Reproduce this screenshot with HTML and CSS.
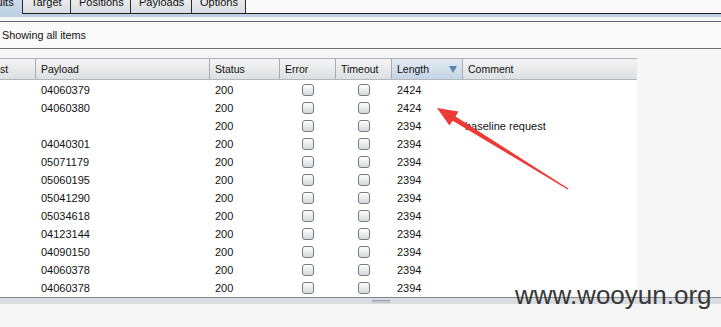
FILE: index.html
```html
<!DOCTYPE html>
<html lang="en">
  <head>
    <meta charset="UTF-8" />
    <meta name="viewport" content="width=device-width, initial-scale=1.0" />
    <link rel="stylesheet" href="styles.css">
    <title>Intruder results</title>
  </head>
  <body>

    <div class="tabbar">
      <div class="tab tab-active">Results</div>
      <div class="tab tab-target">Target</div>
      <div class="tab tab-positions">Positions</div>
      <div class="tab tab-payloads">Payloads</div>
      <div class="tab tab-options">Options</div>
      <div class="tab-fill"></div>
    </div>
    <div class="tab-strip"></div>

    <div class="filter">Showing all items</div>

    <section class="results">
      <div class="head">
        <div class="hcell">Request</div>
        <div class="hcell">Payload</div>
        <div class="hcell">Status</div>
        <div class="hcell">Error</div>
        <div class="hcell">Timeout</div>
        <div class="hcell hcell-sorted">Length <span class="sort-arrow"></span></div>
        <div class="hcell">Comment</div>
      </div>

      <div class="rows" id="rows"></div>
    </section>

    <div class="hscroll"><span class="thumb"></span></div>

    <!-- red arrow pointing at the different length -->
    <svg class="arrow" width="721" height="327" viewBox="0 0 721 327">
      <polygon fill="#ec3b37" points="437,108 458.5,111.5 455.5,116.4 568.4,188.6 567.6,189.4 452.7,120.8 449.5,125.5" />
    </svg>

    <div class="watermark">www.wooyun.org</div>

    <script>
      // payload, status, length, comment
      const results = [
        ["04060379", "200", "2424", ""],
        ["04060380", "200", "2424", ""],
        ["", "200", "2394", "baseline request"],
        ["04040301", "200", "2394", ""],
        ["05071179", "200", "2394", ""],
        ["05060195", "200", "2394", ""],
        ["05041290", "200", "2394", ""],
        ["05034618", "200", "2394", ""],
        ["04123144", "200", "2394", ""],
        ["04090150", "200", "2394", ""],
        ["04060378", "200", "2394", ""],
        ["04060378", "200", "2394", ""]
      ];

      const rows = document.getElementById("rows");
      results.forEach(function (r) {
        const row = document.createElement("div");
        row.className = "row";
        row.innerHTML =
          '<div class="cell"></div>' +
          '<div class="cell">' + r[0] + '</div>' +
          '<div class="cell">' + r[1] + '</div>' +
          '<div class="cell cell-check"><span class="cb"></span></div>' +
          '<div class="cell cell-check"><span class="cb"></span></div>' +
          '<div class="cell">' + r[2] + '</div>' +
          '<div class="cell cell-comment">' + r[3] + '</div>';
        rows.appendChild(row);
      });
    </script>
  </body>
</html>
```

FILE: styles.css
```css
* {
  box-sizing: border-box;
}

body {
  margin: 0;
  background-color: #f6f6f6;
  font-family: "Liberation Sans", Arial, sans-serif;
  font-size: 11px;
  color: #111;
  overflow: hidden;
  position: relative;
  width: 721px;
  height: 327px;
}

/* tabs, cut off at the top */
.tabbar {
  display: flex;
  height: 23px;
  margin-top: -9px;
  background-color: #fafafa;
}

.tab {
  height: 23px;
  padding: 4px 0 0 8px;
  line-height: 14px;
  font-size: 11px;
  white-space: nowrap;
  border-right: 1px solid #2a2a2a;
  border-bottom: 1px solid #1e1e1e;
  background: linear-gradient(#f6f6f8, #d9dbe0);
}

.tab-active {
  margin-left: -31px;
  width: 54px;
  border-bottom: none;
  background: linear-gradient(#d3e0ec, #bcd0e2);
}

.tab-target { width: 48px; }
.tab-positions { width: 60px; }
.tab-payloads { width: 61px; }
.tab-options { width: 54px; }

.tab-fill {
  flex: 1;
  border-bottom: 1px solid #1e1e1e;
}

.tab-strip {
  height: 3px;
  background-color: #bcd0e2;
}

.filter {
  margin-top: 4px;
  height: 28px;
  line-height: 26px;
  padding-left: 2px;
  font-size: 10.8px;
  border-top: 1px solid #6c6c6c;
  border-bottom: 1px solid #6c6c6c;
  background-color: #fafafa;
}

/* results table */
.results {
  margin-top: 9px;
  margin-left: -36px;
  width: 673px;
}

.head,
.row {
  display: grid;
  grid-template-columns: 71px 174px 70px 56px 56px 71px 175px;
}

.head {
  height: 22px;
  border-top: 1px solid #aeb0b8;
  border-bottom: 1px solid #b4b6bc;
}

.hcell {
  padding-left: 5px;
  line-height: 20px;
  font-size: 10.5px;
  border-left: 1px solid #a9abb2;
  background: linear-gradient(#f4f4f4, #dedfe1);
}

.hcell:first-child {
  border-left: none;
}

.hcell-sorted {
  display: flex;
  align-items: center;
  justify-content: space-between;
  padding-right: 5px;
  background: linear-gradient(#e4ecf3, #c4d4e3);
}

.sort-arrow {
  width: 0;
  height: 0;
  border-left: 4px solid transparent;
  border-right: 4px solid transparent;
  border-top: 7px solid #5c87b0;
  margin-top: 1px;
}

.rows {
  height: 217px;
  padding-top: 1px;
  background-color: #fff;
}

.row {
  height: 18px;
}

.cell {
  padding-left: 6px;
  line-height: 18px;
  white-space: nowrap;
}

.cell-comment {
  padding-left: 3px;
}

.cell-check {
  display: flex;
  align-items: center;
  justify-content: center;
  padding-left: 2px;
}

.cb {
  width: 12px;
  height: 12px;
  border: 1px solid #777a80;
  border-radius: 3px;
  background: linear-gradient(#ffffff, #d6d8dc);
}

/* bottom scroll bar */
.hscroll {
  height: 7px;
  border-top: 1px solid #868686;
  background-color: #d9dde2;
  padding-left: 372px;
}

.thumb {
  display: block;
  width: 18px;
  height: 3px;
  margin-top: 2px;
  border-top: 1px solid #9a9ea4;
  background-color: #c3c8cf;
}

.arrow {
  position: absolute;
  left: 0;
  top: 0;
  pointer-events: none;
}

.watermark {
  position: absolute;
  left: 515px;
  top: 282px;
  font-size: 26px;
  line-height: 26px;
  color: #383838;
  white-space: nowrap;
}
```
